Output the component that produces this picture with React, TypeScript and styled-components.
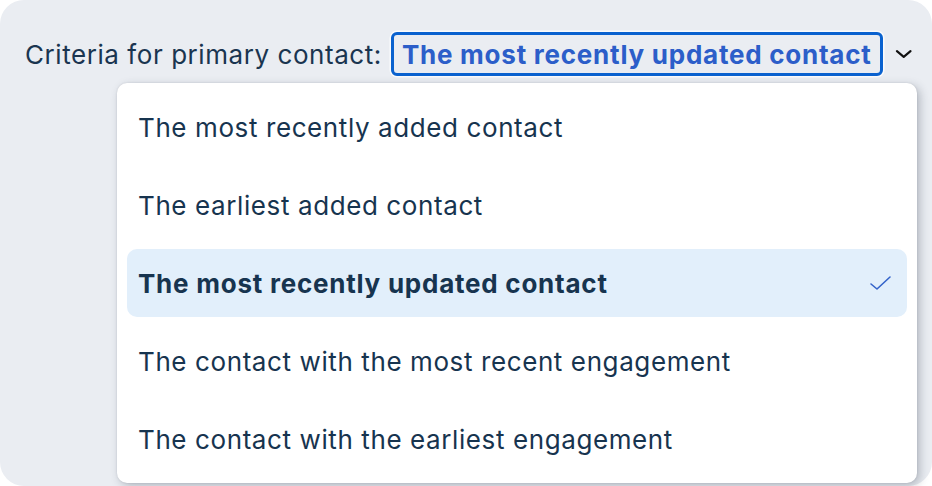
import React from "react";
import styled, { createGlobalStyle } from "styled-components";

const Global = createGlobalStyle`
  html, body { margin: 0; padding: 0; background: #ffffff; }
  body { font-family: Inter, "Noto Sans", sans-serif; }
  * { box-sizing: border-box; }
`;

const Card = styled.div`
  width: 932px;
  height: 486px;
  background: #eaedf2;
  border-radius: 24px;
  padding: 32px 20px 0 25px;
  display: flex;
  flex-direction: column;
  align-items: flex-start;
`;

const Header = styled.div`
  display: flex;
  align-items: center;
  height: 44px;
  width: 100%;
`;

const Label = styled.span`
  font-size: 26px;
  letter-spacing: 0.56px;
  color: #1a3550;
  margin-right: 9px;
  white-space: nowrap;
`;

const SelectBox = styled.div`
  height: 44px;
  display: flex;
  align-items: center;
  padding: 0 8px;
  border: 3px solid #0a62cf;
  border-radius: 6px;
  box-shadow: 0 0 0 1.5px rgba(255, 255, 255, 0.75);
  font-size: 26px;
  letter-spacing: 0.76px;
  font-weight: 700;
  color: #2c5ec9;
  white-space: nowrap;
`;

const Chevron = styled.svg`
  margin-left: 12px;
  width: 18px;
  height: 18px;
`;

const Menu = styled.ul`
  list-style: none;
  margin: 7px 0 0 92px;
  padding: 10px;
  width: 800px;
  background: #ffffff;
  border-radius: 10px;
  box-shadow: 3px 3px 10px rgba(40, 50, 70, 0.28), 0 0 2px rgba(40, 50, 70, 0.15);
  display: flex;
  flex-direction: column;
  gap: 10px;
`;

const Item = styled.li<{ $selected?: boolean }>`
  height: 68px;
  display: flex;
  align-items: center;
  justify-content: space-between;
  padding: 0 14px 0 11px;
  border-radius: 10px;
  font-size: 26px;
  letter-spacing: ${(p) => (p.$selected ? "0.76px" : "0.6px")};
  color: #17344f;
  font-weight: ${(p) => (p.$selected ? 700 : 400)};
  background: ${(p) => (p.$selected ? "#e2effb" : "transparent")};
  white-space: nowrap;
`;

const Check = styled.svg`
  width: 24px;
  height: 24px;
`;

const options = [
  "The most recently added contact",
  "The earliest added contact",
  "The most recently updated contact",
  "The contact with the most recent engagement",
  "The contact with the earliest engagement",
];

export default function App() {
  const selected = 2;
  return (
    <>
      <Global />
      <Card>
        <Header>
          <Label>Criteria for primary contact:</Label>
          <SelectBox>{options[selected]}</SelectBox>
          <Chevron viewBox="0 0 18 18">
            <path d="M2 6 L9 12 L16 6" fill="none" stroke="#111" strokeWidth="2.2" strokeLinecap="round" strokeLinejoin="round" />
          </Chevron>
        </Header>
        <Menu>
          {options.map((o, i) => (
            <Item key={o} $selected={i === selected}>
              <span>{o}</span>
              {i === selected && (
                <Check viewBox="0 0 24 24">
                  <path d="M2 13 L8 18 L21 6" fill="none" stroke="#3463c9" strokeWidth="1.6" strokeLinecap="round" strokeLinejoin="round" />
                </Check>
              )}
            </Item>
          ))}
        </Menu>
      </Card>
    </>
  );
}
